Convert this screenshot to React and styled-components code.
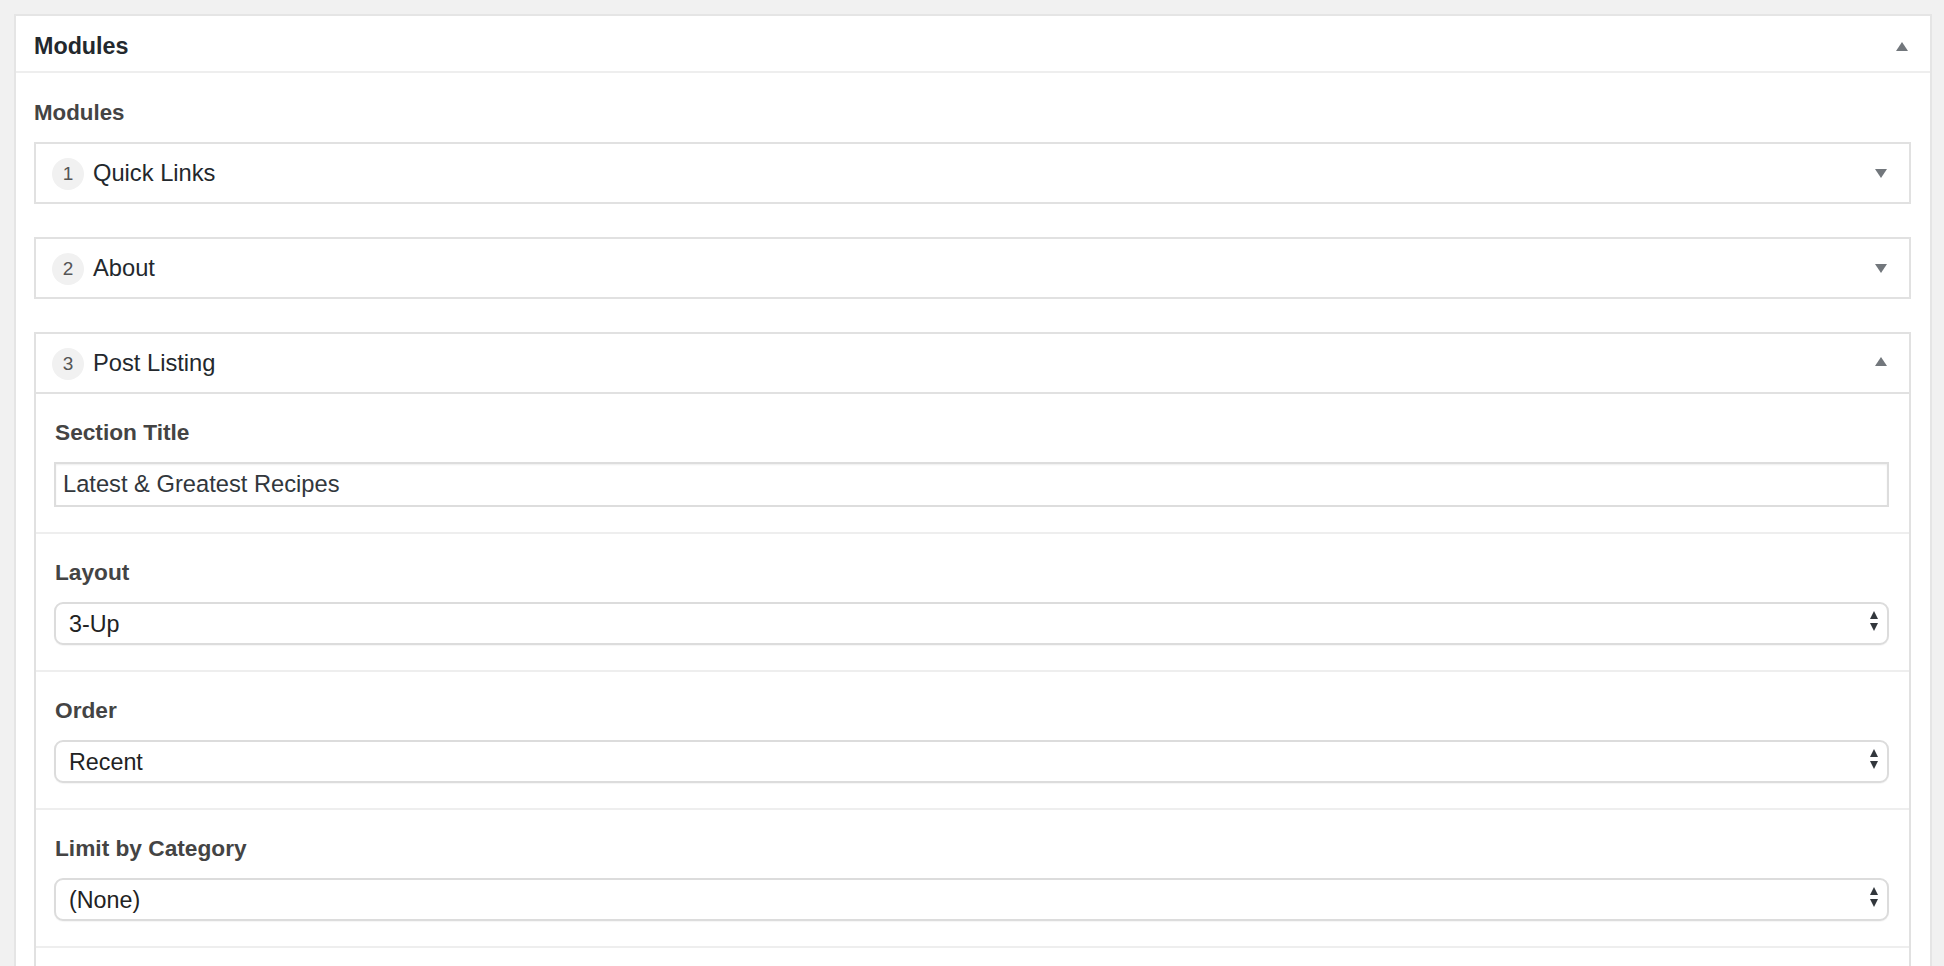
import React from "react";
import styled, { createGlobalStyle } from "styled-components";

const GlobalStyle = createGlobalStyle`
  html, body {
    margin: 0;
    padding: 0;
    background: #f1f1f1;
    font-family: "Liberation Sans", Arial, sans-serif;
    color: #444;
  }
  * {
    box-sizing: border-box;
  }
`;

const Page = styled.div`
  height: 100vh;
  overflow: hidden;
  padding: 14px 12px 0 14px;
`;

const Postbox = styled.div`
  background: #fff;
  border: 2px solid #e5e5e5;
`;

const PostboxHeader = styled.div`
  display: flex;
  align-items: center;
  justify-content: space-between;
  padding: 17px 22px 12px 18px;
  border-bottom: 2px solid #eee;
  h2 {
    margin: 0;
    font-size: 23.3px;
    line-height: 26px;
    font-weight: 700;
    color: #23282d;
  }
`;

const PostboxBody = styled.div`
  padding: 27px 19px 0 18px;
`;

const GroupLabel = styled.div`
  font-size: 22.3px;
  line-height: 26px;
  font-weight: 700;
  color: #444;
  margin: 0 0 16px;
`;

const LayoutBox = styled.div`
  border: 2px solid #e1e1e1;
  background: #fff;
  margin-bottom: 33px;
`;

const Handle = styled.div`
  display: flex;
  align-items: center;
  height: ${(p) => (p.$open ? 60 : 58)}px;
  padding: 0 22px 0 16px;
  border-bottom: ${(p) => (p.$open ? "2px solid #e1e1e1" : "none")};
`;

const OrderBadge = styled.span`
  flex: none;
  width: 32px;
  height: 32px;
  border-radius: 50%;
  background: #f1f1f1;
  color: #555;
  font-size: 19px;
  line-height: 32px;
  text-align: center;
  margin-right: 9px;
  margin-top: 2px;
`;

const HandleTitle = styled.span`
  flex: 1;
  font-size: 23.7px;
  line-height: 28px;
  color: #23282d;
`;

const Toggle = styled.svg`
  flex: none;
  width: 12px;
  height: 9px;
  fill: #72777c;
  margin-top: ${(p) => p.$nudge || 0}px;
`;

const Field = styled.div`
  padding: 25px 20px 25px 18px;
  border-top: ${(p) => (p.$first ? "none" : "2px solid #eee")};
`;

const NextField = styled.div`
  height: 60px;
  border-top: 2px solid #eee;
`;

const FieldLabel = styled.label`
  display: block;
  font-size: 22.7px;
  line-height: 26px;
  font-weight: 700;
  color: #444;
  margin: 0 0 17px 1px;
`;

const TextInput = styled.input`
  display: block;
  width: 100%;
  height: 45px;
  margin: 0;
  padding: 0 7px;
  border: 2px solid #ddd;
  border-radius: 0;
  box-shadow: inset 0 1px 2px rgba(0, 0, 0, 0.07);
  font-family: inherit;
  font-size: 23.7px;
  color: #32373c;
  background: #fff;
  outline: none;
`;

const SelectWrap = styled.div`
  position: relative;
`;

const Select = styled.select`
  display: block;
  width: 100%;
  height: 43px;
  margin: 0;
  padding: 0 40px 0 13px;
  appearance: none;
  -webkit-appearance: none;
  border: 2px solid #dcdcdc;
  border-radius: 9px;
  background: #fff;
  box-shadow: 0 1px 1px rgba(0, 0, 0, 0.04);
  font-family: inherit;
  font-size: 23.3px;
  color: #222;
  outline: none;
`;

const SelectArrows = styled.svg`
  position: absolute;
  right: 11px;
  top: 50%;
  width: 8px;
  height: 20px;
  margin-top: -13px;
  fill: #32373c;
  pointer-events: none;
`;

const Arrow = ({ up, nudge }) => (
  <Toggle viewBox="0 0 12 9" $nudge={nudge}>
    {up ? <polygon points="0,9 12,9 6,0" /> : <polygon points="0,0 12,0 6,9" />}
  </Toggle>
);

const SelectField = ({ label, value, options }) => (
  <Field>
    <FieldLabel>{label}</FieldLabel>
    <SelectWrap>
      <Select defaultValue={value}>
        {options.map((o) => (
          <option key={o}>{o}</option>
        ))}
      </Select>
      <SelectArrows viewBox="0 0 8 20">
        <polygon points="0,8 8,8 4,0" />
        <polygon points="0,12 8,12 4,20" />
      </SelectArrows>
    </SelectWrap>
  </Field>
);

const modules = [
  { n: 1, title: "Quick Links" },
  { n: 2, title: "About" },
];

export default function App() {
  return (
    <Page>
      <GlobalStyle />
      <Postbox>
        <PostboxHeader>
          <h2>Modules</h2>
          <Arrow up nudge={1} />
        </PostboxHeader>
        <PostboxBody>
          <GroupLabel>Modules</GroupLabel>
          {modules.map((m) => (
            <LayoutBox key={m.n}>
              <Handle>
                <OrderBadge>{m.n}</OrderBadge>
                <HandleTitle>{m.title}</HandleTitle>
                <Arrow nudge={1} />
              </Handle>
            </LayoutBox>
          ))}
          <LayoutBox>
            <Handle $open>
              <OrderBadge>3</OrderBadge>
              <HandleTitle>Post Listing</HandleTitle>
              <Arrow up nudge={-3} />
            </Handle>
            <Field $first>
              <FieldLabel>Section Title</FieldLabel>
              <TextInput defaultValue="Latest & Greatest Recipes" />
            </Field>
            <SelectField label="Layout" value="3-Up" options={["3-Up", "2-Up", "List"]} />
            <SelectField label="Order" value="Recent" options={["Recent", "Popular", "Random"]} />
            <SelectField label="Limit by Category" value="(None)" options={["(None)", "Breakfast", "Dinner"]} />
            <NextField />
          </LayoutBox>
        </PostboxBody>
      </Postbox>
    </Page>
  );
}
